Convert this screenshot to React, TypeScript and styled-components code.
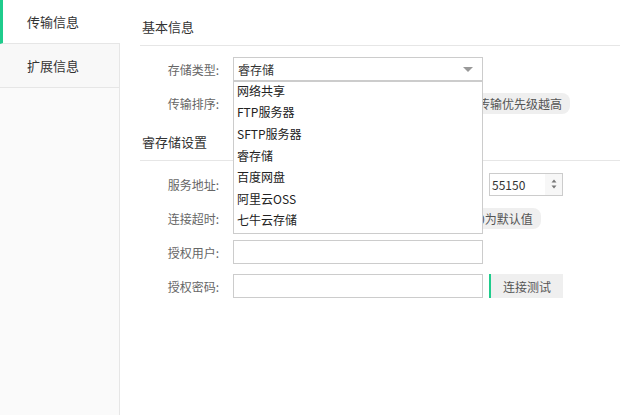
import styled, { createGlobalStyle } from "styled-components";

const GREEN = "#1fcc8c";
const LINE = "#e6e6e6";

const GlobalStyle = createGlobalStyle`
  html, body { margin: 0; padding: 0; background: #fff; }
  body {
    font-family: "Noto Sans CJK SC", "Noto Sans", sans-serif;
    font-size: 12px;
    color: #333;
  }
  * { box-sizing: border-box; }
`;

const storageTypes = ["网络共享", "FTP服务器", "SFTP服务器", "睿存储", "百度网盘", "阿里云OSS", "七牛云存储"];

export default function App() {
  return (
    <>
      <GlobalStyle />
      <Page>
        <Sidebar>
          <Tab $active>传输信息</Tab>
          <Tab>扩展信息</Tab>
        </Sidebar>

        <Main>
          <SectionTitle>基本信息</SectionTitle>
          <Form>
            <Row>
              <Label>存储类型:</Label>
              <SelectWrap>
                <SelectBox>
                  <span>睿存储</span>
                  <Arrow width="10" height="5" viewBox="0 0 10 5">
                    <polygon points="0,0 10,0 5,5" fill="#999" />
                  </Arrow>
                </SelectBox>
                <Dropdown>
                  {storageTypes.map((t) => (
                    <Option key={t}>{t}</Option>
                  ))}
                </Dropdown>
              </SelectWrap>
            </Row>
            <Row>
              <Label>传输排序:</Label>
              <Input $w={183} defaultValue="" />
              <Hint>数值越大传输优先级越高</Hint>
            </Row>
          </Form>

          <SectionTitle>睿存储设置</SectionTitle>
          <Form>
            <Row>
              <Label>服务地址:</Label>
              <Input $w={250} defaultValue="" />
              <PortBox>
                <span>55150</span>
                <Spinner>
                  <svg width="6" height="14" viewBox="0 0 6 14">
                    <polygon points="3,2.5 5.5,5.5 0.5,5.5" fill="#777" />
                    <polygon points="0.5,8.5 5.5,8.5 3,11.5" fill="#777" />
                  </svg>
                </Spinner>
              </PortBox>
            </Row>
            <Row>
              <Label>连接超时:</Label>
              <Input $w={183} defaultValue="" />
              <Hint>单位秒，0为默认值</Hint>
            </Row>
            <Row>
              <Label>授权用户:</Label>
              <Input $w={250} defaultValue="" />
            </Row>
            <Row>
              <Label>授权密码:</Label>
              <Input $w={250} type="password" defaultValue="" />
              <TestButton>连接测试</TestButton>
            </Row>
          </Form>
        </Main>
      </Page>
    </>
  );
}

const Page = styled.div`
  display: flex;
  width: 620px;
  height: 415px;
  overflow: hidden;
`;

const Sidebar = styled.div`
  width: 120px;
  flex-shrink: 0;
  background: #fafafa;
  border-right: 1px solid ${LINE};
  display: flex;
  flex-direction: column;
`;

const Tab = styled.div<{ $active?: boolean }>`
  height: 44px;
  display: flex;
  align-items: center;
  padding-left: ${(p) => (p.$active ? 24 : 27)}px;
  padding-bottom: 1px;
  margin-right: ${(p) => (p.$active ? -1 : 0)}px;
  border-left: ${(p) => (p.$active ? `3px solid ${GREEN}` : "none")};
  border-bottom: 1px solid ${LINE};
  background: ${(p) => (p.$active ? "#fff" : "#f8f8f8")};
  font-size: 13px;
  color: #333;
  position: relative;
  cursor: pointer;
`;

const Main = styled.div`
  flex: 1;
  padding-left: 20px;
`;

const SectionTitle = styled.div`
  padding: 18px 2px 9px;
  font-size: 13px;
  line-height: 18px;
  color: #333;
  border-bottom: 1px solid ${LINE};
`;

const Form = styled.div`
  display: flex;
  flex-direction: column;
  gap: 10px;
  padding-top: 11px;
`;

const Row = styled.div`
  display: flex;
  align-items: center;
  height: 24px;
`;

const Label = styled.label`
  width: 93px;
  flex-shrink: 0;
  padding-right: 14px;
  text-align: right;
  color: #666;
  font-size: 12px;
`;

const Input = styled.input<{ $w: number }>`
  width: ${(p) => p.$w}px;
  height: 24px;
  border: 1px solid #ccc;
  padding: 0 4px;
  font: inherit;
  color: #333;
  outline: none;
`;

const SelectWrap = styled.div`
  position: relative;
  width: 250px;
`;

const SelectBox = styled.div`
  height: 24px;
  border: 1px solid #ccc;
  padding: 0 9px 0 4px;
  display: flex;
  align-items: center;
  justify-content: space-between;
  color: #333;
  background: #fff;
`;

const Arrow = styled.svg`
  display: block;
`;

const Dropdown = styled.div`
  position: absolute;
  top: 24px;
  left: 0;
  width: 250px;
  border: 1px solid #ccc;
  background: #fff;
  z-index: 10;
`;

const Option = styled.div`
  height: 21.6px;
  padding: 0 0 5px 3px;
  display: flex;
  align-items: center;
  color: #222;
  white-space: nowrap;
`;

const Hint = styled.span`
  margin-left: 6px;
  height: 21px;
  line-height: 21px;
  padding: 0 8px;
  border-radius: 8px;
  background: #efefef;
  color: #555;
  white-space: nowrap;
`;

const PortBox = styled.div`
  margin-left: 6px;
  width: 74px;
  height: 23px;
  border: 1px solid #ccc;
  padding-left: 2px;
  display: flex;
  align-items: center;
  justify-content: space-between;
  color: #333;
`;

const Spinner = styled.span`
  width: 17px;
  height: 100%;
  background: #f7f7f7;
  display: flex;
  align-items: center;
  justify-content: center;
`;

const TestButton = styled.button`
  margin-left: 6px;
  width: 74px;
  height: 24px;
  border: none;
  border-left: 2px solid ${GREEN};
  background: #efefef;
  color: #555;
  font: inherit;
  cursor: pointer;
`;
